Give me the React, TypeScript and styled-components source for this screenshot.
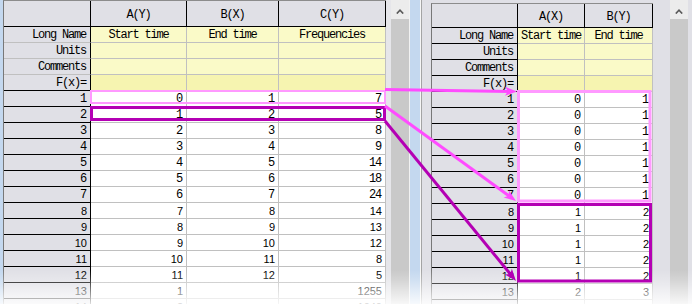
import React from 'react';
import styled, { createGlobalStyle, css } from 'styled-components';

const GlobalStyle = createGlobalStyle`
  html, body { margin: 0; padding: 0; background: #ffffff; }
  body { font-family: "Liberation Mono", "DejaVu Sans Mono", monospace; }
`;

const HEAD_BG = '#e0e0e6';
const FRAME_BG = '#e0e0e6';
const BLUE = '#c4d8ef';
const GRID_LINE = '#c0c0c0';

const Page = styled.div`
  position: relative;
  display: flex;
  width: 692px;
  height: 304px;
  overflow: hidden;
  background: #ffffff;
`;

const BlueStrip = styled.div<{ $w: number }>`
  flex: none;
  width: ${p => p.$w}px;
  background: ${BLUE};
`;

const Filler = styled.div<{ $w: number; $bg: string }>`
  flex: none;
  width: ${p => p.$w}px;
  background: ${p => p.$bg};
`;

const WindowEdge = styled.div`
  flex: none;
  box-sizing: border-box;
  width: 11px;
  background: ${FRAME_BG};
  border-left: 1px solid #f6f6f6;
  box-shadow: inset 1px 0 0 #a4a4a4;
`;

const SheetBody = styled.div`
  flex: none;
  box-sizing: border-box;
  width: 239px;
  padding-top: 3px;
  background: ${FRAME_BG};
  display: flex;
  align-items: flex-start;
`;

const Grid = styled.div<{ $cols: number[]; $head: number }>`
  flex: none;
  display: grid;
  grid-template-columns: ${p => p.$cols.map(c => `${c}px`).join(' ')};
  grid-template-rows: ${p => p.$head}px;
  grid-auto-rows: 16px;
  align-content: start;
  border-left: 1px solid #787878;
  border-top: 1px solid #8c8c8c;
  background: #ffffff;
`;

const sansText = css`
  font-family: "Liberation Sans", Tahoma, sans-serif;
  font-size: 11px;
  letter-spacing: 0;
  padding-right: 3px;
`;

const BaseCell = styled.div`
  box-sizing: border-box;
  display: flex;
  align-items: center;
  min-width: 0;
  overflow: hidden;
  white-space: nowrap;
  font-family: "Liberation Mono", "DejaVu Sans Mono", monospace;
  font-size: 12px;
  letter-spacing: -1.2px;
  line-height: 14px;
  color: #000000;
  border-right: 1px solid ${GRID_LINE};
  border-bottom: 1px solid ${GRID_LINE};
`;

const Corner = styled(BaseCell)`
  background: ${HEAD_BG};
  border-right-color: #000000;
  border-bottom-color: #000000;
`;

const ColHead = styled(BaseCell)`
  background: ${HEAD_BG};
  border-right-color: #000000;
  border-bottom-color: #000000;
  justify-content: center;
  padding-top: 2px;
`;

const RowHead = styled(BaseCell)<{ $soft?: boolean; $sans?: boolean }>`
  background: ${HEAD_BG};
  border-right-color: #000000;
  border-bottom-color: ${p => (p.$soft ? GRID_LINE : '#000000')};
  justify-content: flex-end;
  padding-right: 4px;
  ${p => p.$sans && sansText}
`;

const LabelCell = styled(BaseCell)<{ $fx?: boolean }>`
  background: ${p => (p.$fx ? '#f6f4b0' : '#fafac8')};
  justify-content: center;
`;

const DataCell = styled(BaseCell)<{ $sans?: boolean }>`
  background: #ffffff;
  justify-content: flex-end;
  padding-right: 4px;
  ${p => p.$sans && sansText}
`;

const Scrollbar = styled.div`
  flex: none;
  width: 18px;
  display: flex;
  flex-direction: column;
  background: #c9c9c9;
`;

const ScrollButton = styled.div`
  flex: none;
  height: 19px;
  box-sizing: border-box;
  padding-top: 4px;
  background: #ececec;
  display: flex;
  align-items: center;
  justify-content: center;
`;

const ScrollTrack = styled.div`
  flex: 1;
  background: #c9c9c9;
`;

const Fade = styled.div`
  position: absolute;
  left: 0;
  right: 0;
  bottom: 0;
  height: 34px;
  background: linear-gradient(
    to bottom,
    rgba(255, 255, 255, 0) 0%,
    rgba(255, 255, 255, 0.22) 30%,
    rgba(255, 255, 255, 0.5) 60%,
    rgba(255, 255, 255, 0.86) 100%
  );
  pointer-events: none;
`;

const Annotations = styled.svg`
  position: absolute;
  left: 0;
  top: 0;
  width: 692px;
  height: 304px;
  pointer-events: none;
`;

type Col = { w: number; head: string; name: string };

const LABELS = ['Long Name', 'Units', 'Comments', 'F(x)='];

function Sheet({
  cols,
  rows,
  rhWidth,
  head,
  softLabels,
}: {
  cols: Col[];
  rows: string[][];
  rhWidth: number;
  head: number;
  softLabels: boolean;
}) {
  return (
    <Grid $cols={[rhWidth, ...cols.map(c => c.w)]} $head={head}>
      <Corner />
      {cols.map(c => (
        <ColHead key={c.head}>{c.head}</ColHead>
      ))}
      {LABELS.map((label, i) => (
        <React.Fragment key={label}>
          <RowHead $soft={softLabels && i < 3}>{label}</RowHead>
          {cols.map(c => (
            <LabelCell key={c.head} $fx={i === 3}>
              {i === 0 ? c.name : ''}
            </LabelCell>
          ))}
        </React.Fragment>
      ))}
      {rows.map((r, i) => (
        <React.Fragment key={i}>
          <RowHead $sans={i >= 7}>{i + 1}</RowHead>
          {r.map((v, j) => (
            <DataCell key={j} $sans={i >= 7}>
              {v}
            </DataCell>
          ))}
        </React.Fragment>
      ))}
    </Grid>
  );
}

function ScrollBarV() {
  return (
    <Scrollbar>
      <ScrollButton>
        <svg width="8" height="5" viewBox="0 0 8 5">
          <polyline points="0.8,4.6 4,1.2 7.2,4.6" fill="none" stroke="#5a5a5a" strokeWidth="1.6" />
        </svg>
      </ScrollButton>
      <ScrollTrack />
    </Scrollbar>
  );
}

function Arrow({ x1, y1, x2, y2, color }: { x1: number; y1: number; x2: number; y2: number; color: string }) {
  const dx = x2 - x1;
  const dy = y2 - y1;
  const len = Math.hypot(dx, dy);
  const ux = dx / len;
  const uy = dy / len;
  const hl = 12;
  const hw = 4.5;
  const bx = x2 - ux * hl;
  const by = y2 - uy * hl;
  const pts = `${x2},${y2} ${bx - uy * hw},${by + ux * hw} ${bx + ux * 3},${by + uy * 3} ${bx + uy * hw},${by - ux * hw}`;
  return (
    <g>
      <line x1={x1} y1={y1} x2={bx + ux * 4} y2={by + uy * 4} stroke={color} strokeWidth={3} />
      <polygon points={pts} fill={color} />
    </g>
  );
}

const leftCols: Col[] = [
  { w: 96, head: 'A(Y)', name: 'Start time' },
  { w: 92, head: 'B(X)', name: 'End time' },
  { w: 107, head: 'C(Y)', name: 'Frequencies' },
];

const rightCols: Col[] = [
  { w: 67, head: 'A(X)', name: 'Start time' },
  { w: 68, head: 'B(Y)', name: 'End time' },
];

const leftRows = [
  ['0', '1', '7'],
  ['1', '2', '5'],
  ['2', '3', '8'],
  ['3', '4', '9'],
  ['4', '5', '14'],
  ['5', '6', '18'],
  ['6', '7', '24'],
  ['7', '8', '14'],
  ['8', '9', '13'],
  ['9', '10', '12'],
  ['10', '11', '8'],
  ['11', '12', '5'],
  ['1', '', '1255'],
  ['2', '', '1040'],
];

const rightRows = [
  ...Array.from({ length: 7 }, () => ['0', '1']),
  ...Array.from({ length: 5 }, () => ['1', '2']),
  ['2', '3'],
  ['3', '4'],
];

const PINK = '#ff99ff';
const MAGENTA = '#ff4cff';
const PURPLE = '#b400b4';

export default function App() {
  return (
    <>
      <GlobalStyle />
      <Page>
        <BlueStrip $w={3} />
        <Sheet cols={leftCols} rows={leftRows} rhWidth={87} head={26} softLabels />
        <Filler $w={5} $bg="#e6e6ea" />
        <ScrollBarV />
        <Filler $w={1} $bg="#f2f2f2" />
        <BlueStrip $w={10} />
        <WindowEdge />
        <SheetBody>
          <Sheet cols={rightCols} rows={rightRows} rhWidth={86} head={24} softLabels={false} />
        </SheetBody>
        <ScrollBarV />
        <Filler $w={4} $bg={FRAME_BG} />
        <Fade />
        <Annotations viewBox="0 0 692 304">
          <rect x={91} y={91} width={294} height={12} fill="none" stroke={PINK} strokeWidth={2} />
          <rect x={91.5} y={107.5} width={293} height={12} fill="none" stroke={PURPLE} strokeWidth={3} />
          <rect x={518.5} y={91.5} width={131.5} height={109.5} fill="none" stroke={PINK} strokeWidth={3} />
          <rect x={518.5} y={204.5} width={132} height={76.5} fill="none" stroke={PURPLE} strokeWidth={3} />
          <Arrow x1={385} y1={89.5} x2={517} y2={91.5} color={MAGENTA} />
          <Arrow x1={385} y1={106} x2={516} y2={201} color={MAGENTA} />
          <Arrow x1={385} y1={121} x2={516} y2={281} color={PURPLE} />
        </Annotations>
      </Page>
    </>
  );
}
